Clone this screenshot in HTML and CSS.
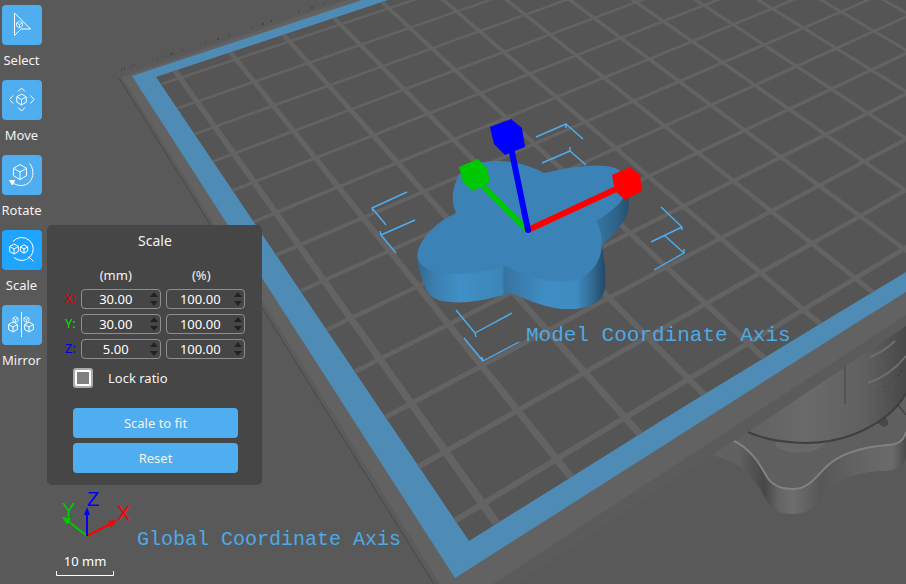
FILE: index.html
```html
<!DOCTYPE html>
<html lang="en">
<head>
<meta charset="utf-8">
<title>Scale tool</title>
<link rel="stylesheet" href="styles.css">
</head>
<body>
<svg class="scene" viewBox="0 0 906 584" preserveAspectRatio="xMinYMin slice" role="img" aria-label="Build plate with model">
  <defs>
    <clipPath id="plate"><path d="M156 77 L388 0 H906 V272 L810 330 L680 409 L469 541 Z"/></clipPath>
    <linearGradient id="drum" x1="740" x2="906" y1="0" y2="0" gradientUnits="userSpaceOnUse">
      <stop offset="0" stop-color="#606060"/><stop offset=".4" stop-color="#6a6a6a"/><stop offset=".75" stop-color="#606060"/><stop offset="1" stop-color="#484848"/>
    </linearGradient>
    <linearGradient id="knob" x1="712" x2="906" y1="0" y2="0" gradientUnits="userSpaceOnUse">
      <stop offset="0" stop-color="#626262"/><stop offset=".14" stop-color="#606060"/><stop offset=".27" stop-color="#474747"/><stop offset=".34" stop-color="#636363"/><stop offset=".42" stop-color="#6e6e6e"/><stop offset=".56" stop-color="#575757"/><stop offset=".8" stop-color="#666"/><stop offset=".93" stop-color="#6a6a6a"/><stop offset="1" stop-color="#4c4c4c"/>
    </linearGradient>
    <linearGradient id="side" x1="417" x2="630" y1="0" y2="0" gradientUnits="userSpaceOnUse">
      <stop offset="0" stop-color="#32668d"/><stop offset=".08" stop-color="#3b7fb0"/><stop offset=".2" stop-color="#408fc6"/><stop offset=".4" stop-color="#3c85b8"/><stop offset=".41" stop-color="#3674a0"/><stop offset=".6" stop-color="#3f8dc3"/><stop offset=".75" stop-color="#3e8bc0"/><stop offset=".82" stop-color="#326b94"/><stop offset=".88" stop-color="#244b68"/><stop offset=".89" stop-color="#2f658b"/><stop offset="1" stop-color="#274f6c"/>
    </linearGradient>
    <linearGradient id="lobe" x1="596" x2="630" y1="0" y2="0" gradientUnits="userSpaceOnUse">
      <stop offset="0" stop-color="#3776a4"/><stop offset=".6" stop-color="#2e6389"/><stop offset="1" stop-color="#264d69"/>
    </linearGradient>
    <symbol id="cube" viewBox="-12 -12 24 24" overflow="visible">
      <path d="M0 -10 L8.7 -5 V5 L0 10 L-8.7 5 V-5 Z M-8.7 -5 L0 0 L8.7 -5 M0 0 V10" vector-effect="non-scaling-stroke"/>
    </symbol>
  </defs>

  <!-- knob and drum under the plate -->
  <path fill="url(#knob)" d="M712 455 C736 461 751 472 762 492 C770 508 776 514 793 514 C812 514 818 501 828 491 C840 478 862 471 885 471 C898 470 903 466 906 458 V415 H720 Z"/>
  <path fill="#5f5f5f" d="M732 440 C752 449 760 465 767 477 C772 485 782 489 793 489 C808 489 815 478 824 469 C838 454 862 447 888 445 C898 445 904 440 906 432 V390 H740 Z"/>
  <path class="shine" d="M732 440 C752 449 760 465 767 477 C772 485 782 489 793 489 C808 489 815 478 824 469 C838 454 862 447 888 445 C898 445 904 440 906 432"/>
  <path fill="#686868" d="M776 440 V447 C790 455 818 456 827 441 Z"/>
  <path fill="#484848" d="M876 421 L885 417 L888 421 V425 L884 427 L880 425 Z"/>
  <path fill="url(#drum)" d="M738 425 L748 432 C770 442 815 449 852 435 C876 426 897 411 906 393 V300 Z"/>
  <path class="seam" d="M748 432 C770 442 815 449 852 435 C876 426 897 411 906 393"/>
  <path class="groove" d="M845 366 V404"/>
  <path class="ridge" d="M868 383 C884 378 897 367 906 356 M870 357 C882 352 889 347 895 341"/>
  <path class="speck" d="M876 392 h1 M884 387 h1 M888 384 h1 M898 375 h1 M901 371 h1 M898 405 l8 10"/>

  <!-- build plate -->
  <path fill="#5b5b5b" d="M117 75 L434 584 H515 L712 455 L748 432 L906 326 V0 H342 Z"/>
  <path fill="#626262" d="M122 77 L440 584 H493 L680 462 L883 330 L906 315 V0 H348 Z"/>
  <path class="edge" d="M119 78 L434 584"/>
  <path class="speck" d="M121 70h1 M124 69h1 M131 66h1 M134 65h1 M157 59h1 M166 56h1 M170 54h2 M173 53h1 M182 50h1 M205 43h1 M217 39h2 M229 35h1 M252 28h1 M262 24h2 M271 21h1 M298 12h1 M311 8h2 M324 4h1"/>
  <path fill="#4e8cb6" d="M132 76 L362 0 H906 V292 L845 330 L680 435 L455 578 Z"/>
  <g clip-path="url(#plate)">
    <path fill="#555" d="M100 0 H906 V584 H100 Z"/>
    <path id="grid" fill="#636363"/>
  </g>

  <!-- selection brackets -->
  <path class="bracket" d="M536 137 L566 124 L583 139 M566 124 v4 M542 163 L570 151 L586 165 M570 151 v-4 M407 192 L372 208 L386 225 M372 208 l1 3 M415 220 L381 235 L396 253 M381 235 l-1 -4 M661 207 L682 227 L651 242 M682 227 v3 M664 235 L684 253 L654 270 M684 253 v-4 M456 310 L475 333 L512 313 M475 333 l1 4 M464 338 L483 361 L519 342 M483 361 l-1 -4"/>

  <!-- model -->
  <path fill="url(#side)" d="M417 258 C419 270 423 285 428 293 C438 307 476 304 511 293 C530 301 548 309 567 309 C598 309 607 298 606 274 L602 245 L560 230 Z"/>
  <path fill="url(#lobe)" d="M602 245 C620 228 629 218 629 203 V192 L590 215 Z"/>
  <path fill="#3b83b6" d="M505 266 C470 276 443 276 430 270 C418 265 416 258 418 250 C424 234 437 222 456 213 C451 202 452 190 457 179 C466 159 509 154 544 173 C569 167 592 164 606 166 C622 167 629 178 627 190 C624 202 610 213 596 221 C602 231 603 241 601 252 C593 287 552 290 505 266 Z"/>

  <!-- model axes -->
  <g class="handles">
    <path stroke="#00c800" d="M527 230 L474 177"/>
    <path stroke="#f00" d="M528 230 L627 184"/>
    <path stroke="#00f" d="M528 230 L509 138"/>
    <circle cx="528" cy="230" r="3" fill="#00d"/>
    <path fill="#00c800" d="M459 167 L478 159 L487 168 L490 182 L473 191 L463 182 Z"/>
    <path fill="#f00" d="M612 175 L630 167 L640 175 L642 191 L625 200 L615 191 Z"/>
    <path fill="#00f" d="M490 127 L511 119 L522 128 L525 147 L505 155 L494 144 Z"/>
  </g>
  <text class="note note-model" x="526" y="341">Model Coordinate Axis</text>

  <!-- world axes and ruler -->
  <g class="world">
    <path stroke="#00c800" d="M87 536 L68 521"/><path fill="#00c800" stroke="none" d="M62 517 L71 518 L67 525 Z"/>
    <path stroke="#f00" d="M87 536 L110 524"/><path fill="#f00" stroke="none" d="M117 520 L108 521 L111 528 Z"/>
    <path stroke="#00f" d="M87 536 V512"/><path fill="#00f" stroke="none" d="M87 507 L90 515 H84 Z"/>
  </g>
  <text class="axis-name" x="62" y="517" fill="#00c800">Y</text>
  <text class="axis-name" x="87" y="506" fill="#00f">Z</text>
  <text class="axis-name" x="117" y="520" fill="#f00">X</text>
  <text class="note" x="137" y="545">Global Coordinate Axis</text>
  <text class="ruler-text" x="85" y="566">10 mm</text>
  <path class="ruler" d="M56.500 571 V575.500 H113.500 V571"/>
</svg>

<main class="app">
  <nav class="tools" aria-label="Tools">
    <div class="tool">
      <button class="tool-button" id="t-select" type="button" aria-labelledby="l-select"><svg viewBox="0 0 40 40"><path d="M12.500 8 L28.500 24 H19 L12.500 30.500 Z"/><use class="fine" href="#cube" x="13.500" y="15.500" width="8" height="8"/></svg></button>
      <label class="tool-name" id="l-select" for="t-select">Select</label>
    </div>
    <div class="tool">
      <button class="tool-button" id="t-move" type="button" aria-labelledby="l-move"><svg viewBox="0 0 40 40"><path d="M16 11.500 L19.500 8 L23 11.500 M28.500 15.500 L32 19.500 L28.500 23.500 M16 27.500 L19.500 31 L23 27.500 M11 15.500 L7.500 19.500 L11 23.500"/><use href="#cube" x="13" y="13" width="13" height="13"/></svg></button>
      <label class="tool-name" id="l-move" for="t-move">Move</label>
    </div>
    <div class="tool">
      <button class="tool-button" id="t-rotate" type="button" aria-labelledby="l-rotate"><svg viewBox="0 0 40 40"><use href="#cube" x="9" y="8" width="18" height="18"/><path d="M27.500 8.500 C34 16 31 30 19.500 30.500 C16 30.500 13 29.500 10.500 27.500"/><path class="solid" d="M7.500 25.500 H12.500 L10.500 30 Z"/></svg></button>
      <label class="tool-name" id="l-rotate" for="t-rotate">Rotate</label>
    </div>
    <div class="tool">
      <button class="tool-button active" id="t-scale" type="button" aria-labelledby="l-scale" aria-pressed="true"><svg viewBox="0 0 40 40"><path d="M11 11.500 A11.500 11.500 0 1 1 12 27.500 M26.500 26.500 L31.500 31.500"/><use href="#cube" x="6" y="13" width="12" height="12"/><use href="#cube" x="17" y="14" width="10" height="10"/></svg></button>
      <label class="tool-name" id="l-scale" for="t-scale">Scale</label>
    </div>
    <div class="tool">
      <button class="tool-button" id="t-mirror" type="button" aria-labelledby="l-mirror"><svg viewBox="0 0 40 40"><path d="M19.500 7 V32"/><use href="#cube" x="5" y="16" width="12" height="12"/><use class="fine" href="#cube" x="10" y="11" width="7" height="7"/><use href="#cube" x="21" y="16" width="12" height="12"/><use class="fine" href="#cube" x="21" y="11" width="7" height="7"/></svg></button>
      <label class="tool-name" id="l-mirror" for="t-mirror">Mirror</label>
    </div>
  </nav>

  <form class="panel">
    <h1 class="title">Scale</h1>
    <div class="fields">
      <span></span><span class="unit">(mm)</span><span class="unit">(%)</span>
      <label class="axis axis-x" for="x-mm">X:</label>
      <div class="spin"><input id="x-mm" type="text" inputmode="decimal" value="30.00"><svg class="arrows" viewBox="0 0 8 14"><path d="M0 5 L4 0 L8 5 Z M0 9 L4 14 L8 9 Z"/></svg></div>
      <div class="spin"><input type="text" inputmode="decimal" value="100.00" aria-label="X percent"><svg class="arrows" viewBox="0 0 8 14"><path d="M0 5 L4 0 L8 5 Z M0 9 L4 14 L8 9 Z"/></svg></div>
      <label class="axis axis-y" for="y-mm">Y:</label>
      <div class="spin"><input id="y-mm" type="text" inputmode="decimal" value="30.00"><svg class="arrows" viewBox="0 0 8 14"><path d="M0 5 L4 0 L8 5 Z M0 9 L4 14 L8 9 Z"/></svg></div>
      <div class="spin"><input type="text" inputmode="decimal" value="100.00" aria-label="Y percent"><svg class="arrows" viewBox="0 0 8 14"><path d="M0 5 L4 0 L8 5 Z M0 9 L4 14 L8 9 Z"/></svg></div>
      <label class="axis axis-z" for="z-mm">Z:</label>
      <div class="spin"><input id="z-mm" type="text" inputmode="decimal" value="5.00"><svg class="arrows" viewBox="0 0 8 14"><path d="M0 5 L4 0 L8 5 Z M0 9 L4 14 L8 9 Z"/></svg></div>
      <div class="spin"><input type="text" inputmode="decimal" value="100.00" aria-label="Z percent"><svg class="arrows" viewBox="0 0 8 14"><path d="M0 5 L4 0 L8 5 Z M0 9 L4 14 L8 9 Z"/></svg></div>
    </div>
    <div class="lock"><input class="tick" id="lock" type="checkbox"><label for="lock">Lock ratio</label></div>
    <div class="actions">
      <button class="action" type="button">Scale to fit</button>
      <button class="action" type="button">Reset</button>
    </div>
  </form>
</main>
<script src="grid.js"></script>
</body>
</html>
```
FILE: styles.css
```css
* { box-sizing: border-box; }

body {
  margin: 0;
  min-height: 100vh;
  overflow: hidden;
  background: #595959;
  color: #f2f2f2;
  font: 13px/20px "Noto Sans", "Open Sans", sans-serif;
}

.scene {
  position: absolute;
  inset: 0;
  width: 100%;
  height: 100%;
}

.scene path { stroke-linejoin: round; }
.shine { fill: none; stroke: #828282; stroke-width: 2; }
.seam { fill: none; stroke: #404040; stroke-width: 2; }
.groove { fill: none; stroke: #454545; }
.ridge { fill: none; stroke: #6e6e6e; stroke-width: 2; }
.speck { fill: none; stroke: #333; }
.edge { fill: none; stroke: #484848; stroke-width: 1; }
.bracket { fill: none; stroke: #4faeef; stroke-width: 1.4; }
.handles path[stroke] { fill: none; stroke-width: 6; }
.world path { fill: none; stroke-width: 2; }
.world path[fill="#00c800"] { fill: #00c800; }
.world path[fill="#f00"] { fill: #f00; }
.world path[fill="#00f"] { fill: #00f; }

.note {
  fill: #4fa9e4;
  font: 20px "Liberation Mono", monospace;
}

.note-model { font-size: 21px; }
.axis-name { font: 20px "Liberation Sans", sans-serif; }

.ruler-text {
  fill: #fff;
  font: 13px "Noto Sans", sans-serif;
  text-anchor: middle;
}

.ruler { fill: none; stroke: #fff; }

.app {
  position: relative;
  display: flex;
  align-items: flex-start;
  gap: 4px;
}

.tools {
  display: flex;
  flex-direction: column;
  width: 43px;
  padding-top: 5px;
}

.tool {
  display: flex;
  flex-direction: column;
  align-items: center;
  height: 75px;
  gap: 5px;
}

.tool-button {
  width: 40px;
  height: 40px;
  padding: 0;
  border: 0;
  border-radius: 4px;
  background: #4faeef;
}

.tool-button.active { background: #1fa5ff; }

.tool-button svg {
  display: block;
  width: 100%;
  fill: none;
  stroke: #fff;
  stroke-width: 1;
}

.tool-button .fine { stroke-width: 1; opacity: .8; }
.tool-button .solid { fill: #fff; }

.panel {
  width: 215px;
  margin-top: 225px;
  padding: 6px 17px 12px 18px;
  border-radius: 5px;
  background: #464646;
}

.title {
  margin: 0 0 14px;
  font-size: 14px;
  font-weight: 400;
  line-height: 20px;
  text-align: center;
}

.fields {
  display: grid;
  grid-template-columns: 11px 1fr 1fr;
  gap: 5px;
}

.unit {
  height: 19px;
  padding-right: 10px;
  text-align: center;
}

.unit + .unit { padding-right: 8px; }

.axis { line-height: 18px; }
.axis-x { color: #e60000; }
.axis-y { color: #00e600; }
.axis-z { color: #0000e0; }

.spin {
  display: flex;
  align-items: center;
  height: 20px;
  padding-right: 2px;
  border: 1px solid #8e8e8e;
  border-radius: 4px;
}

.spin input {
  flex: 1;
  width: 0;
  height: 18px;
  padding: 0;
  border: 0;
  background: none;
  color: #fff;
  font: inherit;
  text-align: center;
}

.arrows { width: 8px; height: 14px; fill: #222; }

.lock {
  display: flex;
  align-items: center;
  gap: 15px;
  margin: 9px 8px 20px;
}

.tick {
  appearance: none;
  width: 20px;
  height: 20px;
  margin: 0;
  border: 2px solid #ababab;
  border-radius: 3px;
  background: #808080;
  box-shadow: inset 0 0 0 2px #fff;
}

.actions {
  display: grid;
  gap: 5px;
  margin: 0 7px 0 8px;
}

.action {
  height: 30px;
  padding: 0;
  border: 0;
  border-radius: 4px;
  background: #4faeef;
  color: #f2f2f2;
  font: inherit;
}
```
FILE: grid.js
```js
// Projects plate coordinates (u across, v toward the viewer) onto the view.
function project(u, v) {
  const d = 1 + 0.0257 * u - 0.02938 * v;
  const x = (180 + 62.2 * u + 11.04 * v) / d;
  const y = (78 - 17.2 * u + 20.69 * v) / d;
  return x.toFixed(1) + " " + y.toFixed(1);
}

function bar(u0, v0, u1, v1) {
  return "M" + [project(u0, v0), project(u1, v0), project(u1, v1), project(u0, v1)].join("L") + "Z";
}

const half = 0.045;
const bars = [];
for (let u = 0; u <= 18; u++) bars.push(bar(u - half, -2, u + half, 14));
for (let v = -1; v <= 13; v++) bars.push(bar(-2, v - half, 20, v + half));
document.getElementById("grid").setAttribute("d", bars.join(""));
```
